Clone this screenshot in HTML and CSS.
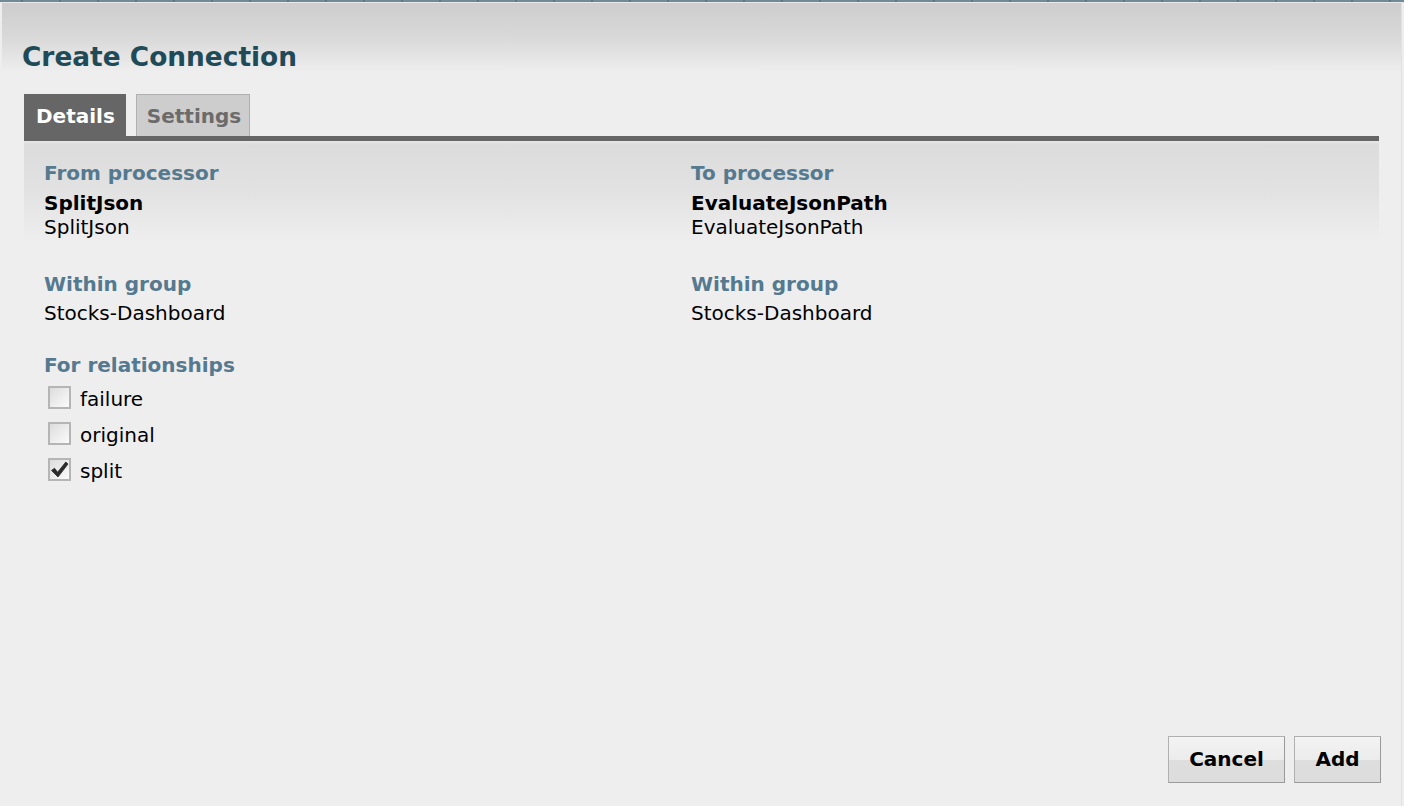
FILE: index.html
```html
<!DOCTYPE html>
<html>
<head>
<meta charset="utf-8">
<title>Create Connection</title>
<link rel="stylesheet" href="styles.css">
</head>
<body>
<div class="topstrip"></div>
<div class="dialog">
  <div class="header">
    <h1 class="title">Create Connection</h1>
  </div>
  <div class="tabs">
    <div class="tab tab-active">Details</div>
    <div class="tab tab-inactive">Settings</div>
  </div>
  <div class="tabbar"></div>
  <div class="panel">
    <div class="col col-left">
      <div class="label">From processor</div>
      <div class="value value-bold first-value">SplitJson</div>
      <div class="value">SplitJson</div>
      <div class="label spaced">Within group</div>
      <div class="value first-value small-gap">Stocks-Dashboard</div>
      <div class="label spaced2">For relationships</div>
      <div class="checks">
        <div class="check-row"><span class="checkbox"></span><span class="check-label">failure</span></div>
        <div class="check-row"><span class="checkbox"></span><span class="check-label">original</span></div>
        <div class="check-row"><span class="checkbox checked"><svg class="checkmark" viewBox="0 0 19 19" width="19" height="19"><path d="M1.5 10.5 L4.5 8.2 L7.6 12.2 L15.8 2 L18 4 L8 17 Z" fill="#2b2b2b" stroke="#2b2b2b" stroke-width="0.8" stroke-linejoin="round"/></svg></span><span class="check-label">split</span></div>
      </div>
    </div>
    <div class="col col-right">
      <div class="label">To processor</div>
      <div class="value value-bold first-value">EvaluateJsonPath</div>
      <div class="value">EvaluateJsonPath</div>
      <div class="label spaced">Within group</div>
      <div class="value first-value small-gap">Stocks-Dashboard</div>
    </div>
  </div>
  <div class="footer">
    <button class="btn btn-cancel">Cancel</button>
    <button class="btn btn-add">Add</button>
  </div>
</div>
</body>
</html>
```

FILE: styles.css
```css
html, body {
  margin: 0;
  padding: 0;
  height: 100%;
}
body {
  background: #eeeeee;
  font-family: "DejaVu Sans", Verdana, sans-serif;
  color: #000;
  overflow: hidden;
}
.topstrip {
  height: 2px;
  background-color: #718a96;
  background-image: repeating-linear-gradient(90deg, transparent 0, transparent 21px, #5f7784 21px, #5f7784 23px, transparent 23px, transparent 38px);
  border-bottom: 1px solid #e9e9e9;
}
.dialog {
  margin: 0 2px 0 2px;
  height: calc(100vh - 3px);
  display: flex;
  flex-direction: column;
  background: #eeeeee;
  border-right: 1px solid #e2e2e2;
}
.header {
  background: linear-gradient(#cdcdcd 0, #d9d9d9 35px, #eeeeee 69px);
  height: 69px;
  padding: 38px 0 0 20px;
  box-sizing: border-box;
}
.title {
  margin: 0;
  font-size: 26.4px;
  line-height: 32px;
  font-weight: bold;
  color: #1f4b59;
}
.tabs {
  display: flex;
  gap: 10px;
  margin: 22px 22px 0 22px;
  height: 42px;
}
.tab {
  font-size: 20px;
  font-weight: bold;
  line-height: 40px;
  height: 42px;
  padding-top: 2px;
  box-sizing: border-box;
}
.tab-active {
  background: #666666;
  color: #ffffff;
  padding-left: 12px;
  padding-right: 11px;
}
.tab-inactive {
  background: #cdcdcd;
  color: #6b6b6b;
  border: 1px solid #b0b0b0;
  border-bottom: none;
  padding-top: 1px;
  padding-left: 10px;
  padding-right: 8px;
}
.tabbar {
  height: 5px;
  background: #666666;
  margin: 0 22px;
}
.panel {
  margin: 0 22px;
  padding: 20px 20px 0 20px;
  display: grid;
  grid-template-columns: 647px 1fr;
  background: linear-gradient(#e6e6e6 0, #dcdcdc 4px, #e2e2e2 50px, #eeeeee 100px) no-repeat;
  background-size: 100% 100px;
  flex: 1;
  align-content: start;
}
.label {
  font-size: 20px;
  line-height: 24px;
  font-weight: bold;
  color: #55798f;
}
.value {
  font-size: 20px;
  line-height: 24px;
}
.value-bold {
  font-weight: bold;
}
.first-value {
  margin-top: 6px;
}
.small-gap {
  margin-top: 5px;
}
.spaced {
  margin-top: 33px;
}
.spaced2 {
  margin-top: 28px;
}
.checks {
  display: flex;
  flex-direction: column;
}
.check-row {
  display: flex;
  align-items: flex-start;
  height: 36px;
}
.checkbox {
  width: 23px;
  height: 23px;
  box-sizing: border-box;
  margin: 9px 9px 0 4px;
  border: 2px solid #b5b5b5;
  background: linear-gradient(135deg, #dcdcdc 0, #ececec 50%, #fbfbfb 100%);
  display: flex;
  align-items: center;
  justify-content: center;
}
.checkmark {
  display: block;
}
.check-label {
  font-size: 20px;
  line-height: 24px;
  margin-top: 10px;
}
.footer {
  display: flex;
  justify-content: flex-end;
  gap: 9px;
  padding: 0 20px 23px 0;
}
.btn {
  font-family: "DejaVu Sans", Verdana, sans-serif;
  font-size: 20px;
  font-weight: bold;
  color: #000;
  height: 47px;
  line-height: 45px;
  padding: 0;
  border: 1px solid #b0b0b0;
  border-right-color: #9a9a9a;
  border-bottom-color: #9a9a9a;
  background: linear-gradient(#f3f3f3 0, #ececec 50%, #dedede 52%, #dcdcdc 100%);
  box-sizing: border-box;
}
.btn-cancel {
  width: 117px;
}
.btn-add {
  width: 87px;
}
```
